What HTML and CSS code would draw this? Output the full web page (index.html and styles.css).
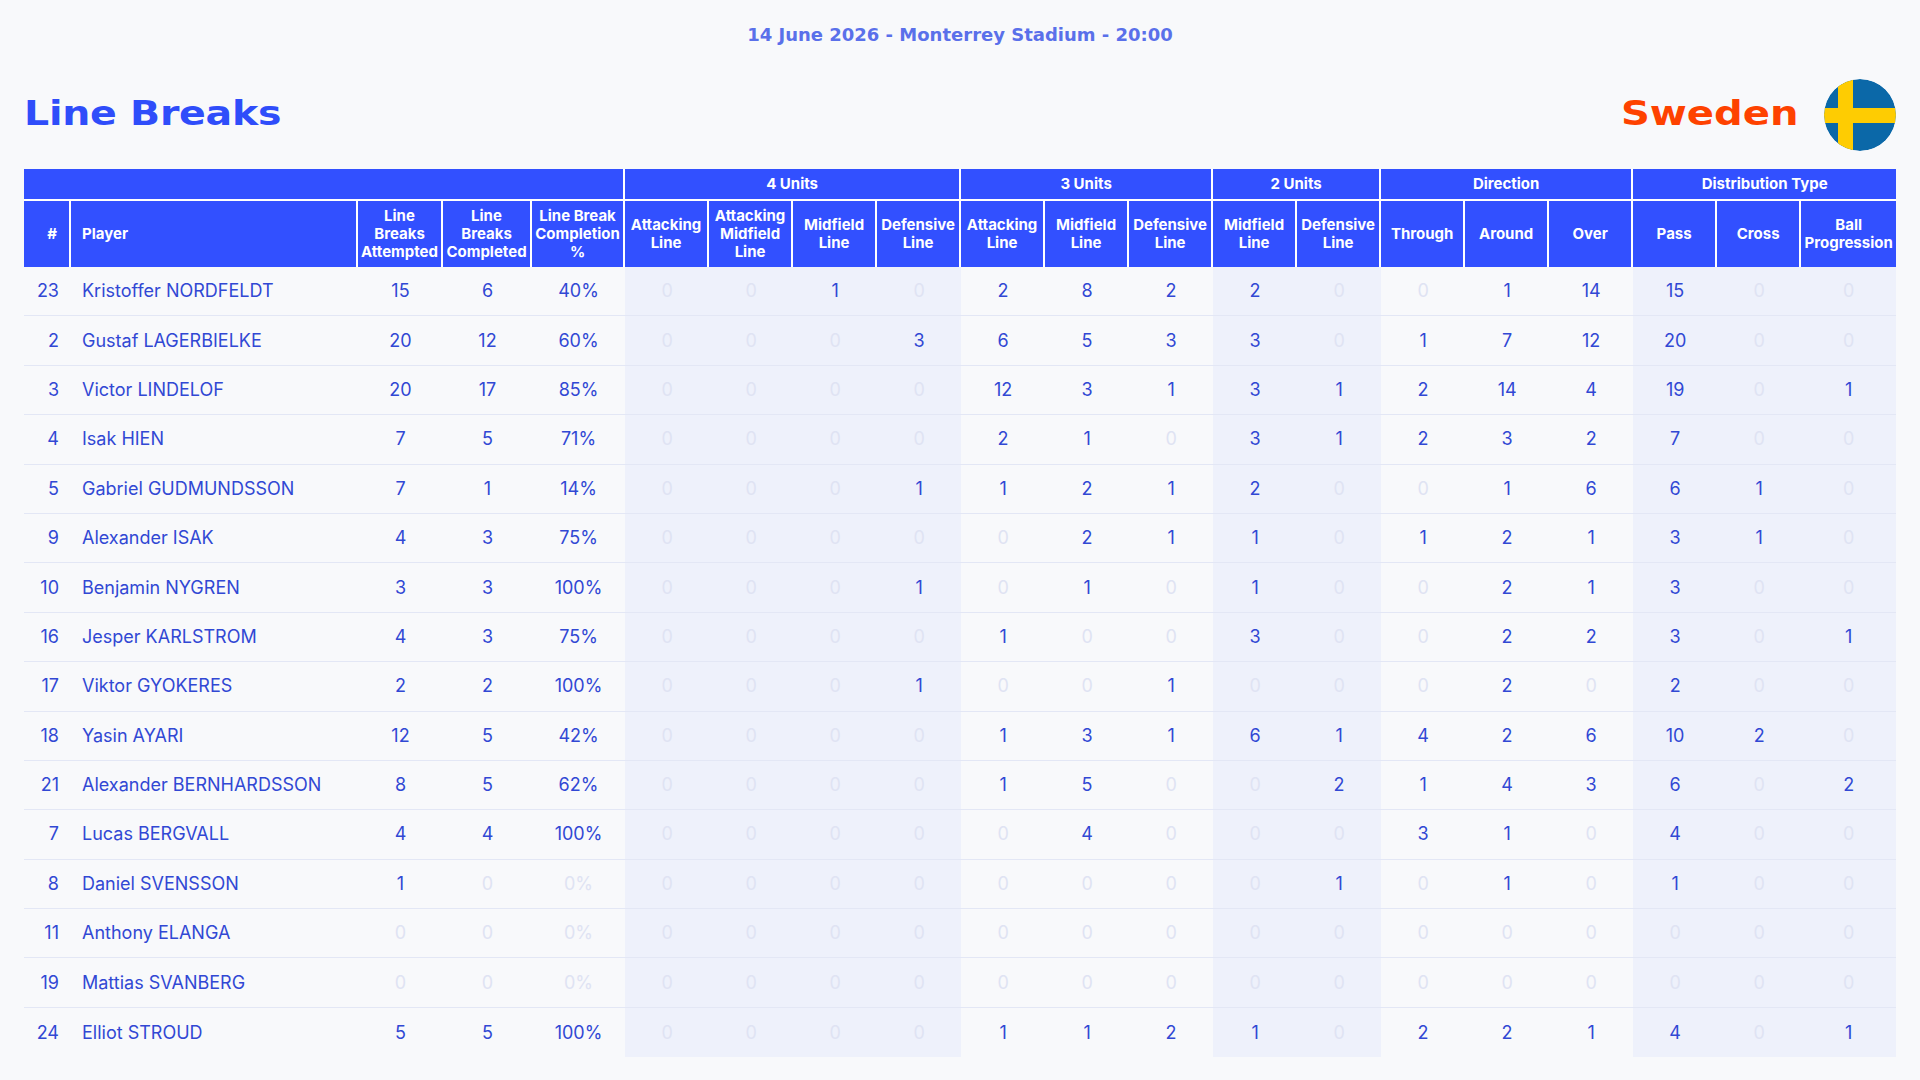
FILE: index.html
```html
<!DOCTYPE html>
<html lang="en">
<head>
<meta charset="utf-8">
<title>Line Breaks - Sweden</title>
<link rel="stylesheet" href="styles.css">
</head>
<body>
<div class="page">
  <p class="date">14 June 2026 - Monterrey Stadium - 20:00</p>
  <header class="head">
    <h1 class="title">Line Breaks</h1>
    <div class="team">
      <span class="team-name">Sweden</span>
      <svg class="flag" viewBox="0 0 72 72" width="72" height="72" aria-hidden="true">
        <defs><clipPath id="fc"><circle cx="36" cy="36" r="36"/></clipPath></defs>
        <g clip-path="url(#fc)">
          <rect x="0" y="0" width="72" height="72" fill="#0b68a8"/>
          <rect x="14" y="0" width="15" height="72" fill="#fecc02"/>
          <rect x="0" y="29" width="72" height="15" fill="#fecc02"/>
        </g>
      </svg>
    </div>
  </header>

  <table class="stats">
    <colgroup>
      <col class="c-num"><col class="c-name"><col class="c-att"><col class="c-comp"><col class="c-pct">
      <col class="c-u shade"><col class="c-u shade"><col class="c-u shade"><col class="c-u shade">
      <col class="c-u"><col class="c-u"><col class="c-u">
      <col class="c-u shade"><col class="c-u shade">
      <col class="c-u"><col class="c-u"><col class="c-u">
      <col class="c-u shade"><col class="c-u shade"><col class="c-bp shade">
    </colgroup>
    <thead>
      <tr class="group">
        <th colspan="5"></th>
        <th colspan="4">4 Units</th>
        <th colspan="3">3 Units</th>
        <th colspan="2">2 Units</th>
        <th colspan="3">Direction</th>
        <th colspan="3">Distribution Type</th>
      </tr>
      <tr class="sub">
        <th class="h-num">#</th>
        <th class="h-name">Player</th>
        <th>Line<br>Breaks<br>Attempted</th>
        <th>Line<br>Breaks<br>Completed</th>
        <th>Line Break<br>Completion<br>%</th>
        <th>Attacking<br>Line</th>
        <th>Attacking<br>Midfield<br>Line</th>
        <th>Midfield<br>Line</th>
        <th>Defensive<br>Line</th>
        <th>Attacking<br>Line</th>
        <th>Midfield<br>Line</th>
        <th>Defensive<br>Line</th>
        <th>Midfield<br>Line</th>
        <th>Defensive<br>Line</th>
        <th>Through</th>
        <th>Around</th>
        <th>Over</th>
        <th>Pass</th>
        <th>Cross</th>
        <th>Ball<br>Progression</th>
      </tr>
    </thead>
    <tbody>
      <tr><td class="num">23</td><td class="name">Kristoffer NORDFELDT</td><td>15</td><td>6</td><td>40%</td><td class="z">0</td><td class="z">0</td><td>1</td><td class="z">0</td><td>2</td><td>8</td><td>2</td><td>2</td><td class="z">0</td><td class="z">0</td><td>1</td><td>14</td><td>15</td><td class="z">0</td><td class="z">0</td></tr>
      <tr><td class="num">2</td><td class="name">Gustaf LAGERBIELKE</td><td>20</td><td>12</td><td>60%</td><td class="z">0</td><td class="z">0</td><td class="z">0</td><td>3</td><td>6</td><td>5</td><td>3</td><td>3</td><td class="z">0</td><td>1</td><td>7</td><td>12</td><td>20</td><td class="z">0</td><td class="z">0</td></tr>
      <tr><td class="num">3</td><td class="name">Victor LINDELOF</td><td>20</td><td>17</td><td>85%</td><td class="z">0</td><td class="z">0</td><td class="z">0</td><td class="z">0</td><td>12</td><td>3</td><td>1</td><td>3</td><td>1</td><td>2</td><td>14</td><td>4</td><td>19</td><td class="z">0</td><td>1</td></tr>
      <tr><td class="num">4</td><td class="name">Isak HIEN</td><td>7</td><td>5</td><td>71%</td><td class="z">0</td><td class="z">0</td><td class="z">0</td><td class="z">0</td><td>2</td><td>1</td><td class="z">0</td><td>3</td><td>1</td><td>2</td><td>3</td><td>2</td><td>7</td><td class="z">0</td><td class="z">0</td></tr>
      <tr><td class="num">5</td><td class="name">Gabriel GUDMUNDSSON</td><td>7</td><td>1</td><td>14%</td><td class="z">0</td><td class="z">0</td><td class="z">0</td><td>1</td><td>1</td><td>2</td><td>1</td><td>2</td><td class="z">0</td><td class="z">0</td><td>1</td><td>6</td><td>6</td><td>1</td><td class="z">0</td></tr>
      <tr><td class="num">9</td><td class="name">Alexander ISAK</td><td>4</td><td>3</td><td>75%</td><td class="z">0</td><td class="z">0</td><td class="z">0</td><td class="z">0</td><td class="z">0</td><td>2</td><td>1</td><td>1</td><td class="z">0</td><td>1</td><td>2</td><td>1</td><td>3</td><td>1</td><td class="z">0</td></tr>
      <tr><td class="num">10</td><td class="name">Benjamin NYGREN</td><td>3</td><td>3</td><td>100%</td><td class="z">0</td><td class="z">0</td><td class="z">0</td><td>1</td><td class="z">0</td><td>1</td><td class="z">0</td><td>1</td><td class="z">0</td><td class="z">0</td><td>2</td><td>1</td><td>3</td><td class="z">0</td><td class="z">0</td></tr>
      <tr><td class="num">16</td><td class="name">Jesper KARLSTROM</td><td>4</td><td>3</td><td>75%</td><td class="z">0</td><td class="z">0</td><td class="z">0</td><td class="z">0</td><td>1</td><td class="z">0</td><td class="z">0</td><td>3</td><td class="z">0</td><td class="z">0</td><td>2</td><td>2</td><td>3</td><td class="z">0</td><td>1</td></tr>
      <tr><td class="num">17</td><td class="name">Viktor GYOKERES</td><td>2</td><td>2</td><td>100%</td><td class="z">0</td><td class="z">0</td><td class="z">0</td><td>1</td><td class="z">0</td><td class="z">0</td><td>1</td><td class="z">0</td><td class="z">0</td><td class="z">0</td><td>2</td><td class="z">0</td><td>2</td><td class="z">0</td><td class="z">0</td></tr>
      <tr><td class="num">18</td><td class="name">Yasin AYARI</td><td>12</td><td>5</td><td>42%</td><td class="z">0</td><td class="z">0</td><td class="z">0</td><td class="z">0</td><td>1</td><td>3</td><td>1</td><td>6</td><td>1</td><td>4</td><td>2</td><td>6</td><td>10</td><td>2</td><td class="z">0</td></tr>
      <tr><td class="num">21</td><td class="name">Alexander BERNHARDSSON</td><td>8</td><td>5</td><td>62%</td><td class="z">0</td><td class="z">0</td><td class="z">0</td><td class="z">0</td><td>1</td><td>5</td><td class="z">0</td><td class="z">0</td><td>2</td><td>1</td><td>4</td><td>3</td><td>6</td><td class="z">0</td><td>2</td></tr>
      <tr><td class="num">7</td><td class="name">Lucas BERGVALL</td><td>4</td><td>4</td><td>100%</td><td class="z">0</td><td class="z">0</td><td class="z">0</td><td class="z">0</td><td class="z">0</td><td>4</td><td class="z">0</td><td class="z">0</td><td class="z">0</td><td>3</td><td>1</td><td class="z">0</td><td>4</td><td class="z">0</td><td class="z">0</td></tr>
      <tr><td class="num">8</td><td class="name">Daniel SVENSSON</td><td>1</td><td class="z">0</td><td class="z">0%</td><td class="z">0</td><td class="z">0</td><td class="z">0</td><td class="z">0</td><td class="z">0</td><td class="z">0</td><td class="z">0</td><td class="z">0</td><td>1</td><td class="z">0</td><td>1</td><td class="z">0</td><td>1</td><td class="z">0</td><td class="z">0</td></tr>
      <tr><td class="num">11</td><td class="name">Anthony ELANGA</td><td class="z">0</td><td class="z">0</td><td class="z">0%</td><td class="z">0</td><td class="z">0</td><td class="z">0</td><td class="z">0</td><td class="z">0</td><td class="z">0</td><td class="z">0</td><td class="z">0</td><td class="z">0</td><td class="z">0</td><td class="z">0</td><td class="z">0</td><td class="z">0</td><td class="z">0</td><td class="z">0</td></tr>
      <tr><td class="num">19</td><td class="name">Mattias SVANBERG</td><td class="z">0</td><td class="z">0</td><td class="z">0%</td><td class="z">0</td><td class="z">0</td><td class="z">0</td><td class="z">0</td><td class="z">0</td><td class="z">0</td><td class="z">0</td><td class="z">0</td><td class="z">0</td><td class="z">0</td><td class="z">0</td><td class="z">0</td><td class="z">0</td><td class="z">0</td><td class="z">0</td></tr>
      <tr><td class="num">24</td><td class="name">Elliot STROUD</td><td>5</td><td>5</td><td>100%</td><td class="z">0</td><td class="z">0</td><td class="z">0</td><td class="z">0</td><td>1</td><td>1</td><td>2</td><td>1</td><td class="z">0</td><td>2</td><td>2</td><td>1</td><td>4</td><td class="z">0</td><td>1</td></tr>
    </tbody>
  </table>
</div>
</body>
</html>
```

FILE: styles.css
```css
* { box-sizing: border-box; }

html, body {
  margin: 0;
  padding: 0;
  background: #f8f9fb;
}

body {
  font-family: Inter, "Noto Sans", "Liberation Sans", sans-serif;
  color: #3148d4;
}

.page {
  padding: 24px 24px 0 24px;
}

.date {
  margin: 0;
  text-align: center;
  font-family: "DejaVu Sans", "Liberation Sans", sans-serif;
  font-weight: 700;
  font-size: 18px;
  line-height: 22px;
  color: #5a70ea;
}

.head {
  margin-top: 33px;
  margin-bottom: 18px;
  height: 72px;
  display: flex;
  align-items: center;
  justify-content: space-between;
}

.title {
  margin: 0 0 5px 0;
  font-family: "DejaVu Sans", "Liberation Sans", sans-serif;
  font-weight: 700;
  font-size: 34px;
  line-height: 40px;
  color: #2f4dfa;
  transform: scaleX(1.16);
  transform-origin: left center;
  letter-spacing: -0.2px;
}

.team {
  display: flex;
  align-items: center;
  gap: 25px;
}

.team-name {
  margin-bottom: 4px;
  font-family: "DejaVu Sans", "Liberation Sans", sans-serif;
  font-weight: 700;
  font-size: 34px;
  line-height: 40px;
  color: #fe4200;
  transform: scaleX(1.18);
  transform-origin: right center;
}

.flag {
  display: block;
  width: 72px;
  height: 72px;
  border-radius: 50%;
}

.stats {
  width: 1872px;
  table-layout: fixed;
  border-collapse: separate;
  border-spacing: 0;
}

.c-num { width: 47px; }
.c-name { width: 287px; }
.c-att { width: 85px; }
.c-comp { width: 89px; }
.c-pct { width: 93px; }
.c-u { width: 84px; }
.c-bp { width: 95px; }

col.shade { background: #eef1fb; }

.stats th {
  background: #3250ff;
  color: #ffffff;
  font-family: Inter, "Noto Sans", sans-serif;
  font-weight: 700;
  font-size: 15px;
  line-height: 18px;
  text-align: center;
  vertical-align: middle;
  padding: 0 2px;
  border-right: 2px solid #ffffff;
}

.stats th:last-child { border-right: none; }

.stats .group th {
  height: 32px;
  border-bottom: 2px solid #ffffff;
}

.stats .sub th {
  height: 66px;
}

.stats .sub th.h-num {
  text-align: right;
  padding-right: 12px;
}

.stats .sub th.h-name {
  text-align: left;
  padding-left: 11px;
}

.stats td {
  height: 49.4px;
  padding: 0;
  text-align: center;
  vertical-align: middle;
  font-size: 18px;
  line-height: 22px;
  font-weight: 400;
  color: #3148d4;
  border-bottom: 1px solid #e3e7f5;
}

.stats tbody tr:last-child td { border-bottom: none; }

.stats td.num {
  text-align: right;
  padding-right: 12px;
}

.stats td.name {
  text-align: left;
  padding-left: 11px;
}

.stats td.z { color: #dfe3f3; }
```
